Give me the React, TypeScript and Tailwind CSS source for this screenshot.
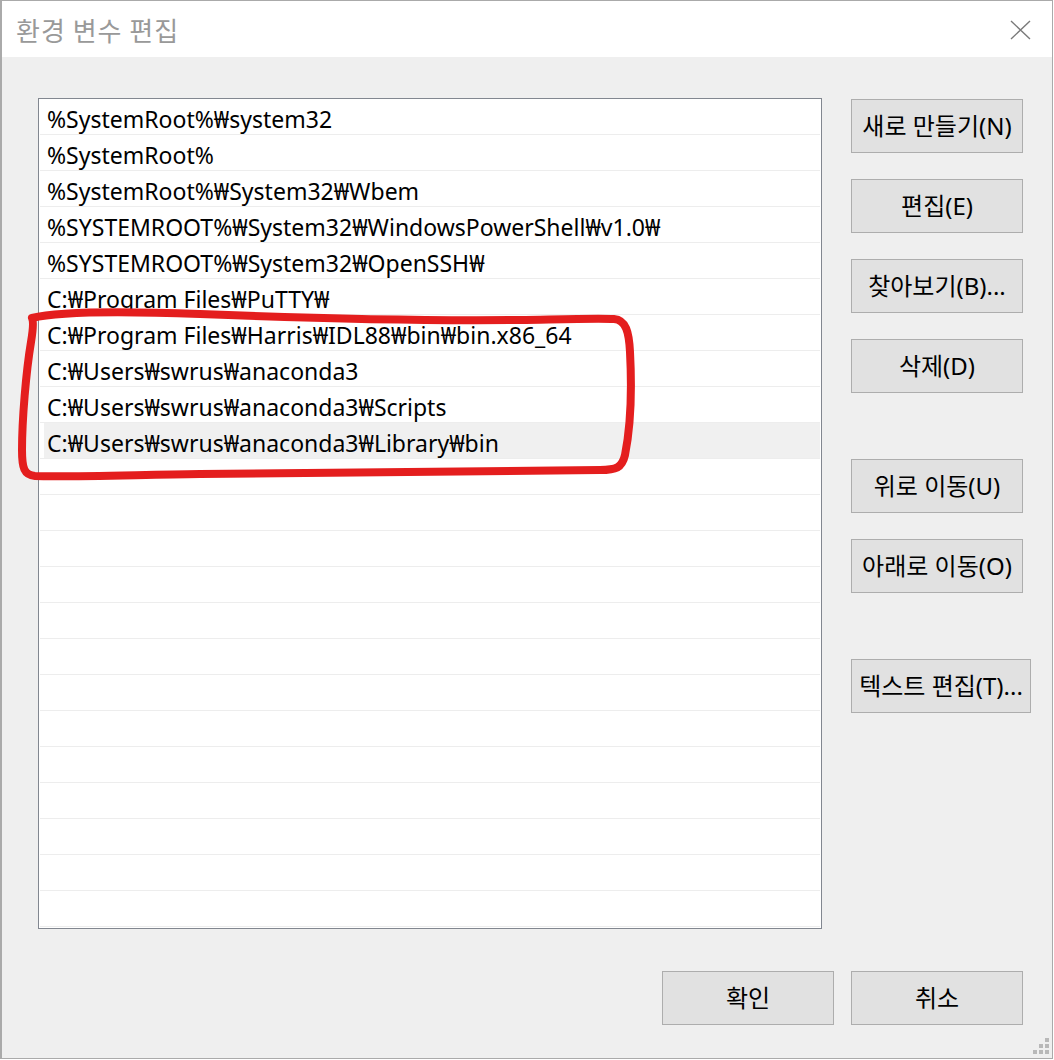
import React from "react";

const rows = [
  "%SystemRoot%₩system32",
  "%SystemRoot%",
  "%SystemRoot%₩System32₩Wbem",
  "%SYSTEMROOT%₩System32₩WindowsPowerShell₩v1.0₩",
  "%SYSTEMROOT%₩System32₩OpenSSH₩",
  "C:₩Program Files₩PuTTY₩",
  "C:₩Program Files₩Harris₩IDL88₩bin₩bin.x86_64",
  "C:₩Users₩swrus₩anaconda3",
  "C:₩Users₩swrus₩anaconda3₩Scripts",
  "C:₩Users₩swrus₩anaconda3₩Library₩bin",
];

const FONT = { fontFamily: '"Noto Sans", "Noto Sans CJK KR", sans-serif' };

function Btn({ label, className = "" }: { label: string; className?: string }) {
  return (
    <div
      className={`h-[54px] flex items-center justify-center border border-[#adadad] bg-[#e1e1e1] text-[24px] text-black whitespace-nowrap ${className}`}
    >
      {label}
    </div>
  );
}

export default function App() {
  const allRows = Array.from({ length: 23 }, (_, i) => rows[i] ?? "");
  return (
    <div className="relative w-[1054px] h-[1060px] bg-white overflow-hidden" style={FONT}>
      <div className="w-[1053px] h-[1059px] flex flex-col border-t border-r border-b border-l-2 border-[#aaaaaa] bg-[#efefef]">
        {/* Title bar */}
        <div className="h-[56px] bg-white flex items-center justify-between pl-[14px] pr-[21px] shrink-0">
          <span className="text-[26px] tracking-[1px] text-[#999999]" style={{ fontFamily: '"Noto Sans CJK KR", sans-serif' }}>
            환경 변수 편집
          </span>
          <svg width="21" height="20" viewBox="0 0 21 20" className="mt-[1px]">
            <path d="M1 1 L20 19 M20 1 L1 19" stroke="#7a7a7a" strokeWidth="1.4" fill="none" />
          </svg>
        </div>
        {/* Body */}
        <div className="flex-1 flex flex-col pl-[36px] pt-[41px] pr-[29px]">
          <div className="flex">
            <div className="w-[784px] h-[831px] border border-[#828790] bg-white overflow-hidden">
              {allRows.map((r, i) => (
                <div key={i} className="h-[36px] pl-[1px] pr-[1px]">
                  <div className={`h-[35px] flex items-center pt-[6px] ${i === 9 ? "bg-[#f0f0f0] ml-[4px] pl-[3px]" : "pl-[7px]"} text-[23px] text-black whitespace-nowrap`}>
                    {r}
                  </div>
                  <div className="h-[1px] bg-[#ededed]" />
                </div>
              ))}
            </div>
            <div className="ml-[29px] pt-[1px] flex flex-col w-[172px]">
              <Btn label="새로 만들기(N)" />
              <Btn label="편집(E)" className="mt-[26px]" />
              <Btn label="찾아보기(B)..." className="mt-[26px]" />
              <Btn label="삭제(D)" className="mt-[26px]" />
              <Btn label="위로 이동(U)" className="mt-[66px]" />
              <Btn label="아래로 이동(O)" className="mt-[26px]" />
              <Btn label="텍스트 편집(T)..." className="mt-[66px] w-[180px]" />
            </div>
          </div>
          <div className="mt-[42px] flex justify-end gap-[17px]">
            <Btn label="확인" className="w-[172px] h-[53px]" />
            <Btn label="취소" className="w-[172px] h-[53px]" />
          </div>
        </div>
      </div>
      {/* Resize grip */}
      <div className="absolute left-[1045px] top-[1038px] w-[4px] h-[4px] bg-[#b8b8b8]" />
      <div className="absolute left-[1039px] top-[1044px] w-[4px] h-[4px] bg-[#b8b8b8]" />
      <div className="absolute left-[1045px] top-[1044px] w-[4px] h-[4px] bg-[#b8b8b8]" />
      <div className="absolute left-[1033px] top-[1050px] w-[4px] h-[4px] bg-[#b8b8b8]" />
      <div className="absolute left-[1039px] top-[1050px] w-[4px] h-[4px] bg-[#b8b8b8]" />
      <div className="absolute left-[1045px] top-[1050px] w-[4px] h-[4px] bg-[#b8b8b8]" />
      {/* Red annotation */}
      <svg className="absolute left-0 top-0 pointer-events-none" width="1054" height="1060">
        <path
          d="M32,318 C60,311 120,311 200,314 C300,318 420,321 520,320 C570,319 600,318 614,319 C626,320 629,332 630,352 C632,390 631,425 625,455 C622,468 616,470 600,470 C450,472 320,473 200,474 C130,475 70,477 35,476 C24,475 22,468 22,450 C22,420 26,372 31,342 C33,330 34,322 32,318"
          stroke="#e41e1e"
          strokeWidth="8"
          fill="none"
          strokeLinecap="round"
          strokeLinejoin="round"
        />
      </svg>
    </div>
  );
}
